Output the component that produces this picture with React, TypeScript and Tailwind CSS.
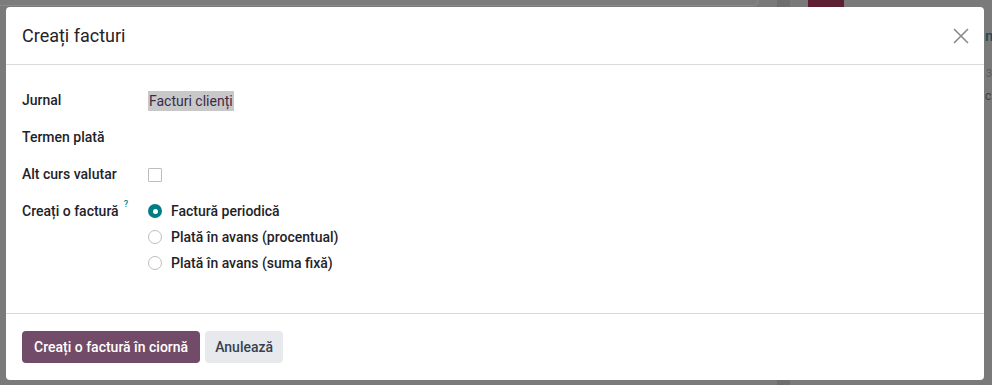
import React from "react";

export default function App() {
  const font = { fontFamily: 'Roboto, "Noto Sans", sans-serif' };
  return (
    <div className="relative w-[992px] h-[385px] overflow-hidden bg-[#7a7a7a]" style={font}>
      {/* faint background content */}
      <div className="absolute left-[-10px] top-[-20px] w-[768px] h-[26px] rounded-[4px] border border-[#8a8a8a] bg-[#7c7c7c]" />
      <div className="absolute left-[777px] top-0 w-[13px] h-[385px] bg-[#6e6e6e]" />
      <div className="absolute left-[808px] top-[-6px] w-[36px] h-[13px] bg-[#5c1f33]" />
      <div className="absolute left-[985px] top-[30px] w-[7px] h-[12px] overflow-hidden text-[15px] leading-[12px] text-[#1d4f55] font-semibold">n</div>
      <div className="absolute left-[986px] top-[68px] text-[11px] leading-[12px] text-[#5a5a5a]">3</div>
      <div className="absolute left-[985px] top-[90px] text-[12px] leading-[12px] text-[#3f3f3f]">c</div>

      {/* modal */}
      <div className="absolute left-[6px] top-[7px] w-[978px] h-[373px] bg-white rounded-[4px] flex flex-col">
        <div className="h-[58px] flex items-center justify-between pl-[16px] pr-[14px] border-b border-[#d8dadd]">
          <div className="text-[18px] text-[#1f2329] leading-none">Creați facturi</div>
          <svg width="18" height="18" viewBox="0 0 18 18" className="mt-[1px]">
            <path d="M2 2 L16 16 M16 2 L2 16" stroke="#8a8a8a" strokeWidth="1.6" />
          </svg>
        </div>
        <div className="flex-1 px-[16px] pt-[17px] text-[14px] text-[#1f2329] border-b border-[#d8dadd]">
          <div className="flex items-center h-[37px]">
            <div className="w-[126px] font-medium">Jurnal</div>
            <div className="bg-[#c8c8c8] text-[#3d2a4a] px-[1px] leading-[20px]">Facturi clienți</div>
          </div>
          <div className="flex items-center h-[37px]">
            <div className="w-[126px] font-medium">Termen plată</div>
          </div>
          <div className="flex items-center h-[37px]">
            <div className="w-[126px] font-medium">Alt curs valutar</div>
            <div className="w-[14px] h-[14px] border border-[#bdbdbd] rounded-[1px]" />
          </div>
          <div className="flex items-start pt-[8px]">
            <div className="w-[126px] font-medium flex">
              Creați o factură
              <span className="text-[#0b7b80] text-[9px] ml-[5px] -mt-[3px]">?</span>
            </div>
            <div className="flex flex-col gap-[6px]">
              <div className="flex items-center gap-[9px] h-[20px] font-medium">
                <div className="w-[14px] h-[14px] rounded-full bg-[#017e84] flex items-center justify-center">
                  <div className="w-[5px] h-[5px] rounded-full bg-white" />
                </div>
                Factură periodică
              </div>
              <div className="flex items-center gap-[9px] h-[20px] font-medium">
                <div className="w-[14px] h-[14px] rounded-full border border-[#bdbdbd]" />
                Plată în avans (procentual)
              </div>
              <div className="flex items-center gap-[9px] h-[20px] font-medium">
                <div className="w-[14px] h-[14px] rounded-full border border-[#bdbdbd]" />
                Plată în avans (suma fixă)
              </div>
            </div>
          </div>
        </div>
        <div className="h-[66px] flex items-center px-[16px] gap-[5px]">
          <button className="h-[32px] px-[12px] rounded-[4px] bg-[#714b67] text-white text-[14px] font-medium">Creați o factură în ciornă</button>
          <button className="h-[32px] px-[10px] rounded-[4px] bg-[#e7e9ed] text-[#374151] text-[14px] font-medium">Anulează</button>
        </div>
      </div>
    </div>
  );
}
